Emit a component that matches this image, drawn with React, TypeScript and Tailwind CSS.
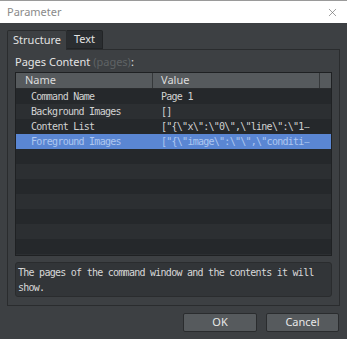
import { X } from "lucide-react";

const mono = "font-['DejaVu_Sans_Mono',monospace] text-[10px] tracking-[-0.74px]";
const sans = "font-['Noto_Sans',sans-serif]";

const rows = [
  { name: "Command Name", value: "Page 1" },
  { name: "Background Images", value: "[]" },
  { name: "Content List", value: '["{\\"x\\":\\"0\\",\\"line\\":\\"1', more: true },
  { name: "Foreground Images", value: '["{\\"image\\":\\"\\",\\"conditi', more: true, selected: true },
];

const App = () => {
  const empty = Array.from({ length: 7 });
  return (
    <div className="w-[347px] h-[339px] bg-[#3d4043] flex flex-col overflow-hidden">
      {/* title bar */}
      <div className="h-[23px] bg-white border-t border-[#9a9a9a] flex items-center justify-between pl-[7px] pr-[8px]">
        <span className={`${sans} text-[11px] text-[#8a8a8a]`}>Parameter</span>
        <X className="w-[13px] h-[13px] text-[#6a6a6a]" strokeWidth={1.2} />
      </div>

      <div className="flex-1 flex flex-col px-[7px] pt-[7px]">
        {/* tabs */}
        <div className="flex h-[19px]">
          <div className={`${sans} w-[60px] h-[20px] bg-[#3d4043] border border-b-0 border-[#2a2c2e] rounded-t-[2px] text-[11px] text-[#e2e2e2] flex items-center justify-center z-10`}>
            Structure
          </div>
          <div className={`${sans} w-[36px] bg-[#2a2d30] border border-l-0 border-[#222426] rounded-tr-[2px] text-[11px] text-[#e2e2e2] flex items-center justify-center`}>
            Text
          </div>
        </div>

        {/* panel */}
        <div className="h-[257px] border border-[#2a2c2e] px-[7px] flex flex-col">
          <div className={`${sans} text-[11px] text-[#e4e4e4] h-[22px] flex items-end pb-[2px]`}>
            Pages Content&nbsp;<span className="text-[#5f6365]">(pages)</span>:
          </div>

          {/* table */}
          <div className="h-[184px] border border-[#1f2123] bg-[#25282b] flex flex-col overflow-hidden">
            <div className={`${sans} h-[16px] bg-[#565a5d] flex text-[11px] text-[#dcdcdc] border-b border-[#2a2c2e] shrink-0`}>
              <div className="w-[137px] pl-[9px] border-r border-[#35383a] flex items-center">Name</div>
              <div className="w-[167px] pl-[8px] border-r border-[#35383a] flex items-center">Value</div>
              <div className="flex-1" />
            </div>
            {rows.map((r, i) => (
              <div
                key={r.name}
                className={`h-[15px] shrink-0 flex items-center ${mono} ${
                  r.selected ? "bg-[#5a86d3] text-[#aec7f0]" : i % 2 === 0 ? "bg-[#25282b] text-[#d2d2d2]" : "bg-[#2c2f32] text-[#d2d2d2]"
                }`}
              >
                <div className="w-[137px] pl-[15px] whitespace-nowrap overflow-hidden">{r.name}</div>
                <div className="flex-1 pl-[8px] whitespace-nowrap overflow-hidden">
                  {r.value}
                  {r.more && <span className="tracking-normal text-[8px] ml-[1px]">⋯</span>}
                </div>
              </div>
            ))}
            {empty.map((_, i) => (
              <div key={i} className={`h-[15px] shrink-0 ${i % 2 === 0 ? "bg-[#25282b]" : "bg-[#2c2f32]"}`} />
            ))}
            <div className="flex-1 bg-[#2c2f32]" />
          </div>

          {/* description */}
          <div className={`mt-[6px] h-[35px] border border-[#2a2c2e] rounded-[3px] bg-[#323538] pl-[2px] pt-[2px] ${mono} leading-[15px] text-[#d8d8d8]`}>
            The pages of the command window and the contents it will
            <br />
            show.
          </div>
        </div>

        {/* buttons */}
        <div className="flex justify-end gap-[9px] mt-[7px] pr-[1px]">
          <button className={`${sans} w-[74px] h-[19px] bg-[#565a5d] border border-[#2a2c2e] rounded-[2px] text-[11px] text-[#e8e8e8]`}>
            OK
          </button>
          <button className={`${sans} w-[73px] h-[19px] bg-[#565a5d] border border-[#2a2c2e] rounded-[2px] text-[11px] text-[#e8e8e8]`}>
            Cancel
          </button>
        </div>
      </div>
    </div>
  );
};

export default App;
